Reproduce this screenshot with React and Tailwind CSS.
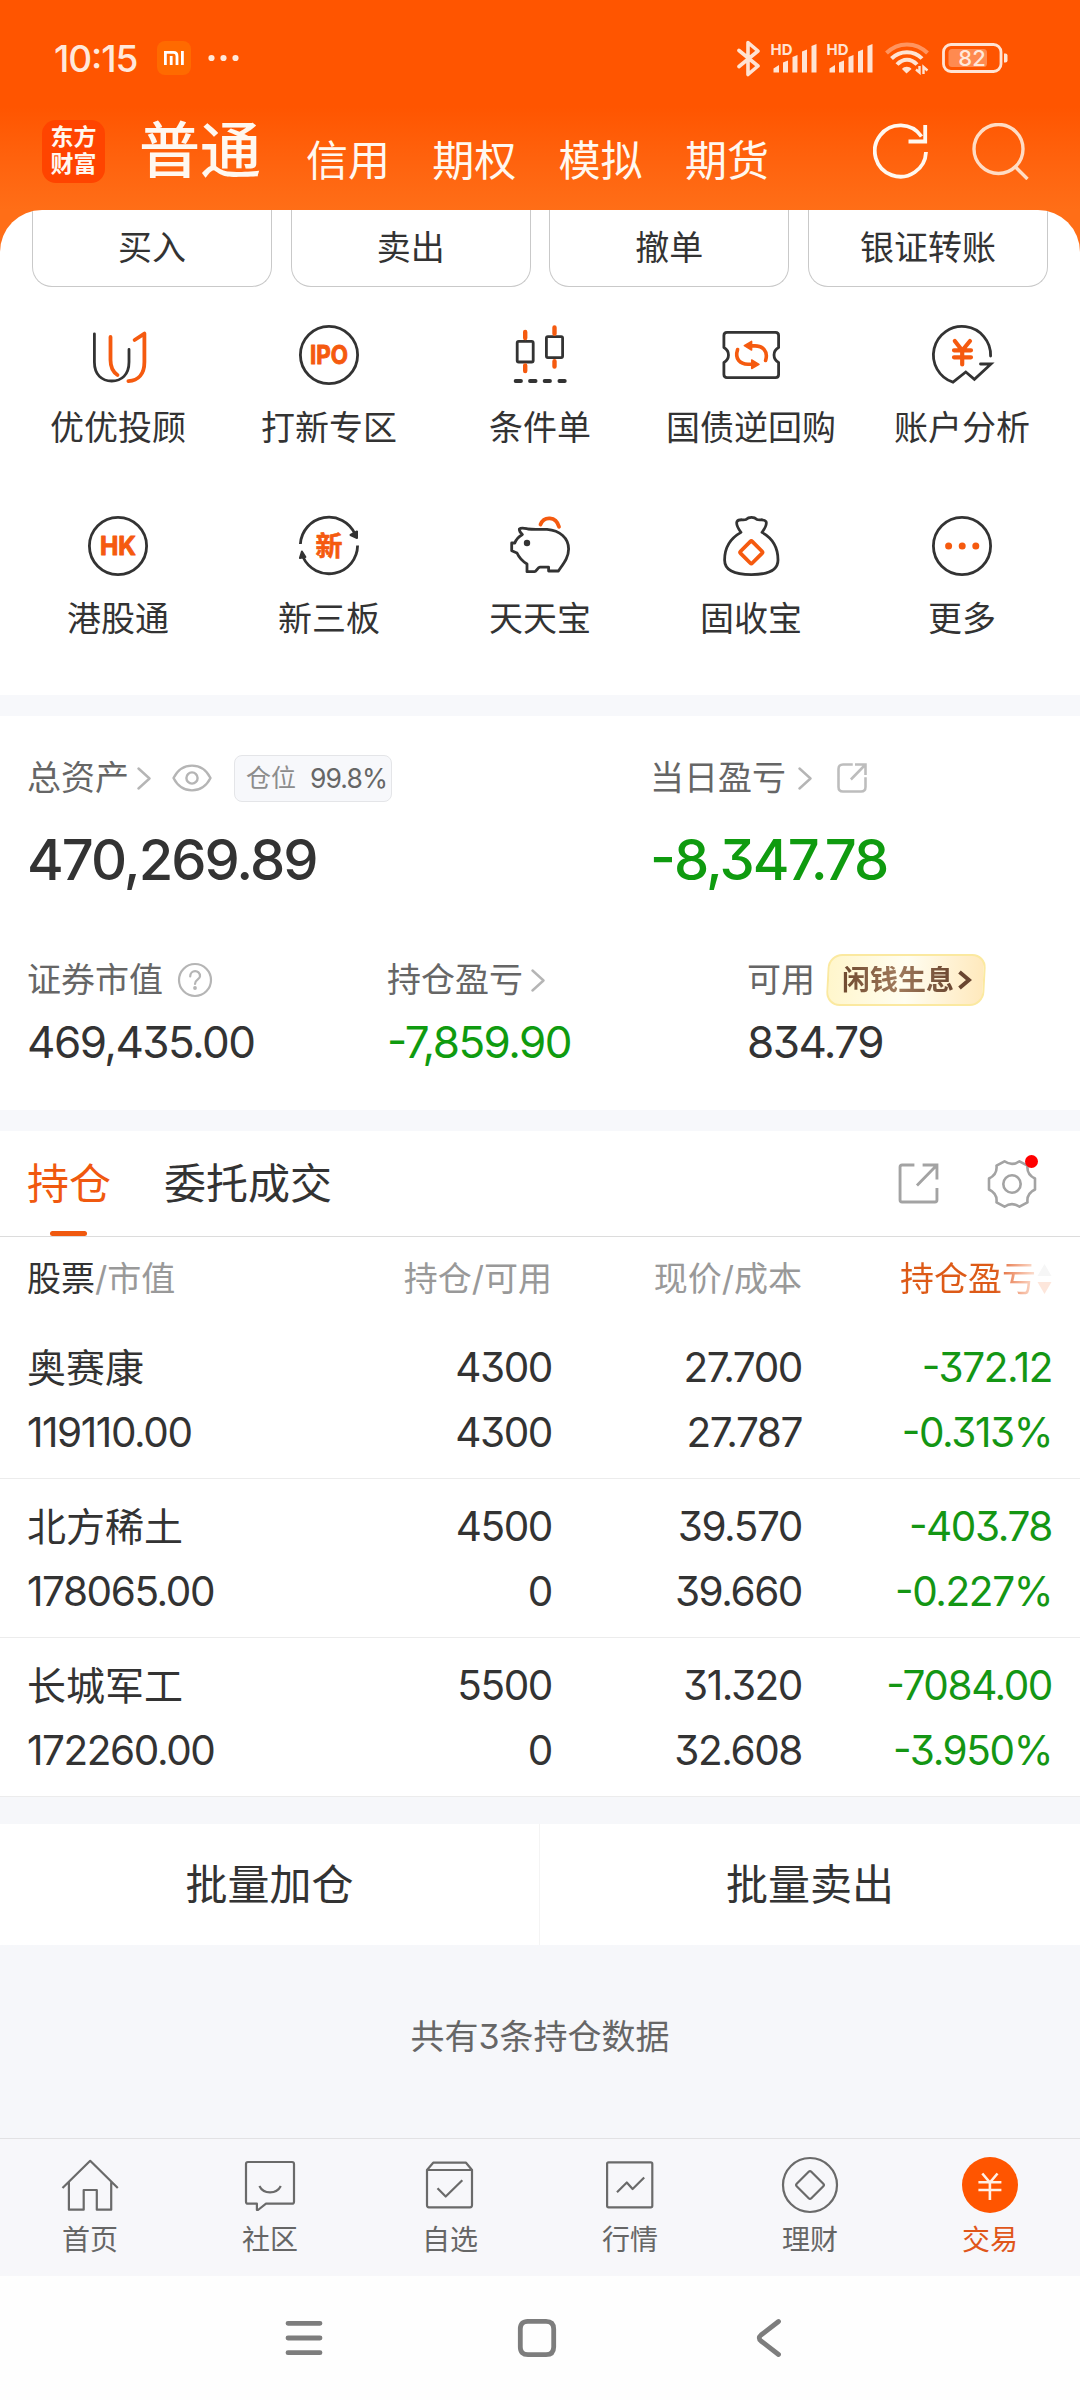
const INK = '#333333'
const ORANGE = '#f55a0f'

const accountTabs = ['信用', '期权', '模拟', '期货']
const tradeButtons = ['买入', '卖出', '撤单', '银证转账']

const holdings = [
  { name: '奥赛康', value: '119110.00', qty: '4300', avail: '4300', price: '27.700', cost: '27.787', pnl: '-372.12', pct: '-0.313%' },
  { name: '北方稀土', value: '178065.00', qty: '4500', avail: '0', price: '39.570', cost: '39.660', pnl: '-403.78', pct: '-0.227%' },
  { name: '长城军工', value: '172260.00', qty: '5500', avail: '0', price: '31.320', cost: '32.608', pnl: '-7084.00', pct: '-3.950%' },
]

function MenuIcon({ children }) {
  return (
    <svg className="w-[60px] h-[60px] overflow-visible" viewBox="0 0 60 60" fill="none" stroke={INK} strokeWidth={2.8}
      strokeLinecap="round" strokeLinejoin="round">
      {children}
    </svg>
  )
}

function CircleText({ text, width }) {
  return (
    <MenuIcon>
      <circle cx="30" cy="30" r="28.6" />
      <text x="30" y="39.2" textAnchor="middle" textLength={width} lengthAdjust="spacingAndGlyphs" fill={ORANGE}
        stroke={ORANGE} strokeWidth={1} fontFamily="Inter, sans-serif" fontWeight="700" fontSize="25.5">{text}</text>
    </MenuIcon>
  )
}

const menu = [
  {
    label: '优优投顾',
    icon: (
      <MenuIcon>
        <path d="M6.4 8.8V37C6.4 50 14 56 23.7 56S41 50 41 37V24.5" />
        <g stroke={ORANGE} strokeWidth={3.8}>
          <path d="M22.5 12V35c0 8 2.5 12 7 15" />
          <path d="M46.6 15l9.8-6.4V37c0 12-6 18.6-16 19.2" />
        </g>
      </MenuIcon>
    ),
  },
  { label: '打新专区', icon: <CircleText text="IPO" width={38} /> },
  {
    label: '条件单',
    icon: (
      <MenuIcon>
        <rect x="7.2" y="16.4" width="16" height="20.6" rx="1.5" />
        <rect x="36.4" y="11.6" width="16.2" height="21" rx="1.5" />
        <g stroke={ORANGE} strokeWidth={4.4}>
          <path d="M15.2 7v6M15.2 40.5v5.5M44.5 2.4v6.4M44.5 36.3V41.500" />
        </g>
        <path d="M5.6 56h5.400M20 56h5.600M34.600 56h5.400M49.400 56h5.400" strokeWidth={3.8} />
      </MenuIcon>
    ),
  },
  {
    label: '国债逆回购',
    icon: (
      <MenuIcon>
        <path d="M6 7.400H54.500Q57.600 7.400 57.600 10.500V22.500C51.500 26 51.500 34 57.600 37.500V49.500Q57.600 52.600 54.500 52.600H6Q2.900 52.600 2.900 49.500V37.500C9 34 9 26 2.900 22.500V10.500Q2.900 7.400 6 7.400Z" />
        <g stroke={ORANGE} strokeWidth={3.6}>
          <path d="M44.600 35.500C47.500 26 41.500 20.900 34 20.900H30" />
          <path d="M16.600 24.500C13.500 34 19 39.200 27 39.200H31" />
        </g>
        <path d="M23.300 20.700l7.300-4.300v8.600zM38 39.300l-7.300-4.300v8.600z" fill={ORANGE} stroke={ORANGE} strokeWidth={1.5} />
      </MenuIcon>
    ),
  },
  {
    label: '账户分析',
    icon: (
      <MenuIcon>
        <path strokeLinejoin="miter" d="M58.600 31A28.600 28.600 0 1 0 21 57.200L33.800 47l8.600 7.300L59 39H48.500" />
        <path d="M22.800 16l7.400 9.500L38 16M30.200 25.500v14M22 25.300h17M22 32.300h17" stroke={ORANGE} strokeWidth={4.2} />
      </MenuIcon>
    ),
  },
  { label: '港股通', icon: <CircleText text="HK" width={36} /> },
  {
    label: '新三板',
    icon: (
      <MenuIcon>
        <path strokeLinecap="butt" d="M1.400 28A28.600 28.600 0 0 1 56 18M58.600 29.500A28.600 28.600 0 0 1 4 41" />
        <path d="M51.500 19l6.500-3.500v6.500zM2.900 35.500l3.500 5.500-5.500 1z" fill={INK} strokeWidth={2} />
        <text x="30" y="39.600" textAnchor="middle" fill={ORANGE} fontFamily="'Noto Sans CJK SC', sans-serif" stroke={ORANGE}
          strokeWidth={0.6} fontWeight="700" fontSize="27">新</text>
      </MenuIcon>
    ),
  },
  {
    label: '天天宝',
    icon: (
      <MenuIcon>
        <path d="M30.500 8.500C34 0 46 0 49 10.800" stroke={ORANGE} strokeWidth={3.800} />
        <path d="M9.300 13C11.500 11 15 12.300 18 13 25 14 31 13 37 13.400 50 14.500 58.600 22 58.600 33c0 9-5.600 15-10.200 22H38.600V51.200H30C27.500 51.500 26.500 55.700 24.500 55.700H17V48C13 45.500 9 41.500 7 37L1.700 34.700V27H4.800C6 23.500 9 20.500 12.400 18.500 10.500 17 9.300 15 9.300 13z" />
        <circle cx="17" cy="27" r="3.200" fill={INK} stroke="none" />
      </MenuIcon>
    ),
  },
  {
    label: '固收宝',
    icon: (
      <MenuIcon>
        <path d="M20 16.400C17.500 13 14.500 9 16 5.500 18 2.500 22 4.500 25 3.500 28 .700 33 .700 36 3.500 39 4.500 43 2.500 45 5.500 46.500 9 43.500 13 41 16.400 52 22.500 57 31 57 44 57 54 48 58.600 30.400 58.600S3.600 54 3.600 44C3.600 31 9 22.500 20 16.400z" />
        <rect x="22" y="28" width="16.600" height="16.600" rx="1.500" transform="rotate(45 30.300 36.300)" stroke={ORANGE} strokeWidth={3.800} />
      </MenuIcon>
    ),
  },
  {
    label: '更多',
    icon: (
      <MenuIcon>
        <circle cx="30" cy="30" r="28.600" />
        <g fill={ORANGE} stroke="none">
          <circle cx="16.600" cy="30" r="3.500" />
          <circle cx="30.200" cy="30" r="3.500" />
          <circle cx="43.800" cy="30" r="3.500" />
        </g>
      </MenuIcon>
    ),
  },
]

const bottomNav = [
  {
    label: '首页',
    d: 'M2.500 33L30.200 5.800 57.800 33M8.900 27.300V54.700H23.700V35H36.800V54.700H51.200V27.300',
  },
  {
    label: '社区',
    d: 'M8 7H52Q54 7 54 9V46.700Q54 48.700 52 48.700H26L18 55H16.900V48.700H8Q6 48.700 6 46.700V9Q6 7 8 7zM19.400 31C23.500 39.500 36.500 39.500 40.800 31',
  },
  {
    label: '自选',
    d: 'M7 15L13.200 7.700H46L52 15V50.300Q52 52.300 50 52.300H9Q7 52.300 7 50.300zH52M17.500 33.300l8.200 8.200L42.300 25.300',
  },
  {
    label: '行情',
    d: 'M8.600 7.300H50.800Q52.300 7.300 52.300 8.800V50.800Q52.300 52.300 50.800 52.300H8.600Q7.100 52.300 7.100 50.800V8.800Q7.100 7.300 8.600 7.300zM17 37.200l9.800-9.700 5.800 6.500L44.200 22.500',
  },
  {
    label: '理财',
    d: 'M30 3A27 27 0 1 0 30 57 27 27 0 1 0 30 3zM28.700 16.700Q30 15.400 31.300 16.700L43.300 28.700Q44.600 30 43.300 31.300L31.300 43.300Q30 44.600 28.700 43.300L16.700 31.300Q15.400 30 16.700 28.700z',
  },
]

function Chevron({ className }) {
  return (
    <svg className={className} width="14" height="23" viewBox="0 0 14 23" fill="none" stroke="#b5b5b5" strokeWidth={2.4}
      strokeLinecap="round" strokeLinejoin="round">
      <path d="M1.500 1.500L12.500 11.500 1.500 21.500" />
    </svg>
  )
}

function Signal() {
  return (
    <svg width="46" height="30" viewBox="0 0 46 30" fill="#ffe3d3">
      <text x="-0.500" y="12" fontFamily="Inter, sans-serif" fontWeight="700" fontSize="15" textLength="22" lengthAdjust="spacingAndGlyphs">HD</text>
      <path d="M2.500 29.500V25.500L8 22V29.500z" />
      <path d="M12 29.500V19.500L17 17.500V29.500z" />
      <path d="M21.500 29.500V14L26.500 12V29.500z" />
      <path d="M31 29.500V8.500L36 6.500V29.500z" />
      <path d="M40.500 29.500V3L45.500 1V29.500z" />
    </svg>
  )
}

function StatusBar() {
  return (
    <div className="flex items-center h-[116px] pl-[54px] pr-[72px] text-[#ffe8da]">
      <span className="w-[103px] text-[37px] font-medium leading-none tracking-[-0.03em]">10:15</span>
      <span className="flex items-center justify-center w-[34px] h-[34px] rounded-[8px] bg-[#ff6a00]">
        <svg width="20" height="14" viewBox="0 0 20 14" fill="none" stroke="#fff" strokeWidth={2.800}>
          <path d="M1.400 14V1.400H9.500Q13 1.400 13 5V14M7.200 14V5M18.400 14V0" />
        </svg>
      </span>
      <svg className="ml-[17px]" width="31" height="8" viewBox="0 0 31 8" fill="#ffe8da">
        <circle cx="3.500" cy="4" r="3.100" />
        <circle cx="15.500" cy="4" r="3.100" />
        <circle cx="27.500" cy="4" r="3.100" />
      </svg>
      <div className="flex items-center ml-auto">
        <svg width="24" height="37" viewBox="0 0 24 37" fill="none" stroke="#ffe3d3" strokeWidth={3.600} strokeLinejoin="round" strokeLinecap="round">
          <path d="M2 10.500L21 26 11 34.500V2.500L21 11 2 26.500" />
        </svg>
        <div className="flex gap-[10px] ml-[10px]">
          <Signal />
          <Signal />
        </div>
        <svg className="ml-3" width="44" height="34" viewBox="0 0 44 34" fill="none" stroke="#ffe3d3" strokeWidth={4}>
          <path d="M1.500 12C13 .500 31 .500 42.500 12" opacity="0.450" />
          <path d="M6.500 17.500C15 9 29 9 37 17.500" />
          <path d="M12 23.500C18 17 26 17 32 23.500" />
          <path d="M21.500 32.500L17 28C19 25 24.500 25 26.500 28z" fill="#ffe3d3" stroke="none" />
          <path d="M34.500 25V31.500L31 28.500M38.500 33V26L42.500 29.500" strokeWidth={2.400} />
        </svg>
        <svg className="ml-[13px]" width="66" height="30" viewBox="0 0 66 30">
          <rect x="1.500" y="1.500" width="57.500" height="27" rx="7.500" fill="none" stroke="#ffe3d3" strokeWidth={2.800} />
          <rect x="6.500" y="6" width="38.500" height="18" rx="3.500" fill="#ff8a50" />
          <path d="M62 10.500h1.500q2 0 2 2v5q0 2-2 2H62z" fill="#ffe3d3" />
          <text x="30" y="22.800" textAnchor="middle" fill="#ffe8da" fontFamily="Inter, sans-serif" fontWeight="500" fontSize="22">82</text>
        </svg>
      </div>
    </div>
  )
}

function Header() {
  return (
    <div className="flex items-center h-[70px] mb-6 pl-[42px] pr-[51px] text-[#fff8f0]">
      <div className="flex flex-col items-center justify-center w-[63px] h-[63px] rounded-[14px] bg-[#ff4400] text-[23px] leading-[27px] font-bold">
        <span>东方</span>
        <span>财富</span>
      </div>
      <h1 className="ml-[34px] w-[131px] text-[61px] leading-none font-medium">普通</h1>
      <nav className="flex gap-[42px] ml-[36px] pt-[19px] text-[42px] leading-[50px]">
        {accountTabs.map(t => <span key={t} className="w-[84.300px] whitespace-nowrap">{t}</span>)}
      </nav>
      <svg className="ml-auto" width="56" height="56" viewBox="0 0 56 56" fill="none" stroke="#fff8f0" strokeWidth={3.800}>
        <path d="M53 29A25.600 25.600 0 1 1 48.500 13.500" />
        <path d="M52.200 2V18.500H35.500" />
      </svg>
      <svg className="ml-[43px]" width="57" height="57" viewBox="0 0 57 57" fill="none" stroke="#ffdcc4" strokeWidth={3.400}>
        <circle cx="26.500" cy="26" r="24.500" />
        <path d="M43 43.500L55.500 56" />
      </svg>
    </div>
  )
}

function ShareIcon({ size, color, rx }) {
  return (
    <svg width={size} height={size} viewBox="0 0 40 40" fill="none" stroke={color} strokeWidth={size > 30 ? 2.800 : 3.400}>
      <path d={rx > 3
        ? 'M21 2H8Q2 2 2 8V32Q2 38 8 38H32Q38 38 38 32V19'
        : 'M16 2H4Q2 2 2 4V36Q2 38 4 38H36Q38 38 38 36V24.500'} />
      <path d="M24 2H38V16M38 2L18.500 22" />
    </svg>
  )
}

function Assets() {
  return (
    <section className="h-[394px] pl-[27px] pt-[38px] bg-white text-[34px] text-[#666666]">
      <div className="flex">
        <div className="w-[623px]">
          <div className="flex items-center h-12 leading-none">
            <span>总资产</span>
            <Chevron className="ml-2" />
            <svg className="ml-[21px]" width="40" height="28" viewBox="0 0 40 28" fill="none" stroke="#b5b5b5" strokeWidth={2.400}>
              <path d="M1.500 14C10-2.500 30-2.500 38.500 14 30 30.500 10 30.500 1.500 14z" strokeLinejoin="round" />
              <circle cx="20" cy="14" r="5.600" />
            </svg>
            <span className="flex items-center gap-[14px] ml-[22px] w-[158px] h-[47px] pl-[11px] rounded-[8px] border border-[#e4e5e8] bg-[#f7f8fb]">
              <span className="text-[25px] text-[#8c8c8c]">仓位</span>
              <span className="num text-[26.500px] tracking-[-0.035em]">99.8%</span>
            </span>
          </div>
          <div className="mt-7 text-[56px] leading-[60px] font-medium tracking-[-0.035em] text-[#333333]">470,269.89</div>
        </div>
        <div>
          <div className="flex items-center h-12 leading-none">
            <span>当日盈亏</span>
            <Chevron className="ml-3 mr-[25px]" />
            <ShareIcon size={30} color="#bdbdbd" rx={6} />
          </div>
          <div className="mt-7 text-[56px] leading-[60px] font-medium tracking-[-0.035em] text-[#0f9b0f]">-8,347.78</div>
        </div>
      </div>

      <div className="grid grid-cols-3 w-[1080px] mt-16">
        <div>
          <div className="flex items-center h-[52px] leading-none">
            <span>证券市值</span>
            <svg className="ml-[14px]" width="36" height="36" viewBox="0 0 36 36" fill="none" stroke="#b5b5b5" strokeWidth={2.200}>
              <circle cx="18" cy="18" r="16" />
              <path d="M13.200 14.500C13.200 7.500 23 7.500 23 14.200 23 17.500 18 17.500 18 22" strokeLinecap="round" />
              <circle cx="18" cy="26" r="1.900" fill="#b5b5b5" stroke="none" />
            </svg>
          </div>
          <div className="mt-[11px] text-[44px] leading-[51px] tracking-[-0.035em] text-[#333333]">469,435.00</div>
        </div>
        <div>
          <div className="flex items-center h-[52px] leading-none">
            <span>持仓盈亏</span>
            <Chevron className="ml-2" />
          </div>
          <div className="mt-[11px] text-[44px] leading-[51px] tracking-[-0.035em] text-[#0f9b0f]">-7,859.90</div>
        </div>
        <div>
          <div className="flex items-center h-[52px] leading-none">
            <span>可用</span>
            <span className="relative flex items-center w-[158px] h-[52px] ml-3 pl-[15px]">
              <span className="absolute inset-0 -skew-x-3 rounded-[14px] border-2 border-[#fbe9a0] bg-linear-to-r from-[#fff6cc] via-[#fffdf0] to-[#ffe9bd]" />
              <span className="relative text-[28px] font-bold bg-linear-to-r from-[#6f4a30] via-[#a07a5c] to-[#6a4630] bg-clip-text text-transparent">闲钱生息</span>
              <svg className="relative ml-1" width="14" height="20" viewBox="0 0 14 20" fill="none" stroke="#6a4630" strokeWidth={4}>
                <path d="M1.500 2L11 10 1.500 18" />
              </svg>
            </span>
          </div>
          <div className="mt-[11px] text-[44px] leading-[51px] tracking-[-0.035em] text-[#333333]">834.79</div>
        </div>
      </div>
    </section>
  )
}

function HoldingTabs() {
  return (
    <div className="flex items-center h-[106px] pl-[27px] pr-[43px] border-b border-[#dcdcdc] bg-white text-[42px] leading-none text-[#333333]">
      <div className="relative flex items-center h-full text-[#f0590f]">
        持仓
        <span className="absolute left-[23px] bottom-0 w-[37px] h-[5px] rounded-full bg-[#f0590f]" />
      </div>
      <span className="ml-[53px]">委托成交</span>
      <div className="flex items-center ml-auto">
        <ShareIcon size={41} color="#a3a3a3" rx={2} />
        <span className="relative ml-[48px]">
          <svg width="50" height="50" viewBox="0 0 50 50" fill="none" stroke="#a3a3a3" strokeWidth={2.600} strokeLinejoin="round">
            <path d="M17.500 2.300Q25 7.500 32.500 2.300L40.500 6.700Q39.500 15.500 48 19.500V30.500Q39.500 34.500 40.500 43.300L32.500 47.700Q25 42.500 17.500 47.700L9.500 43.300Q10.500 34.500 2 30.500V19.500Q10.500 15.500 9.500 6.700z" />
            <circle cx="25" cy="25" r="8.700" />
          </svg>
          <span className="absolute -top-1 -right-[1px] w-[13px] h-[13px] rounded-full bg-[#ff0000]" />
        </span>
      </div>
    </div>
  )
}

function HoldingTable() {
  return (
    <div className="bg-white">
      <div className="flex items-center h-[83px] pl-[27px] pr-7 text-[34px] leading-none text-[#999999] text-right">
        <div className="w-[300px] text-left"><span className="text-[#333333]">股票</span>/市值</div>
        <div className="w-[225px]">持仓/可用</div>
        <div className="w-[250px]">现价/成本</div>
        <div className="flex items-center justify-end w-[250px]">
          <span className="bg-linear-to-r from-[#dd5a17] from-70% to-[#fbe3d6] bg-clip-text text-transparent leading-[44px]">持仓盈亏</span>
          <svg className="ml-[1px]" width="15" height="30" viewBox="0 0 15 30">
            <path d="M7.500 0L14.500 12H.500z" fill="#f6f6f6" />
            <path d="M7.500 30L14.500 18H.500z" fill="#fde6db" />
          </svg>
        </div>
      </div>
      {holdings.map(h => (
        <div key={h.name} className="flex h-[159px] pl-[27px] pr-7 pt-[15px] border-b border-[#ececec] text-[40.500px] leading-[65px] tracking-[-0.035em] text-right text-[#333333]">
          <div className="w-[300px] text-left">
            <div className="text-[39px] tracking-normal">{h.name}</div>
            <div>{h.value}</div>
          </div>
          <div className="w-[225px]">
            <div>{h.qty}</div>
            <div>{h.avail}</div>
          </div>
          <div className="w-[250px]">
            <div>{h.price}</div>
            <div>{h.cost}</div>
          </div>
          <div className="w-[250px] text-[#149614]">
            <div>{h.pnl}</div>
            <div>{h.pct}</div>
          </div>
        </div>
      ))}
    </div>
  )
}

function BottomNav() {
  return (
    <nav className="grid grid-cols-6 h-[138px] pt-[16px] border-t border-[#e2e2e4] bg-[#f7f7fa] text-[28px] leading-[34px] text-[#666666]">
      {bottomNav.map(item => (
        <div key={item.label} className="flex flex-col items-center gap-2">
          <svg width="60" height="60" viewBox="0 0 60 60" fill="none" stroke="#6a6a6a" strokeWidth={2.200} strokeLinejoin="round">
            <path d={item.d} />
          </svg>
          <span>{item.label}</span>
        </div>
      ))}
      <div className="flex flex-col items-center gap-2 text-[#e0561a]">
        <svg width="60" height="60" viewBox="0 0 60 60" fill="none" stroke="#fff0e6" strokeWidth={2.600}>
          <circle cx="30" cy="30" r="28" fill="#ff5500" stroke="none" />
          <path d="M22.300 18.500L29.900 27.500 37.500 18.500M29.900 27V45M18.400 27.200H41.400M18.400 35H41.400" />
        </svg>
        <span>交易</span>
      </div>
    </nav>
  )
}

function SystemNav() {
  return (
    <div className="flex items-center h-[124px] pl-[189px] bg-[#fefefe]">
      {[
        'M3 5.300H35M3 20H35M3 34.700H35',
        'M10 3.300H29Q36.700 3.300 36.700 11V29Q36.700 36.700 29 36.700H11Q3.300 36.700 3.300 29V11Q3.300 3.300 11 3.300',
        'M29.500 3.500L12 17Q8.500 20 12 23L29.500 36.500',
      ].map(d => (
        <div key={d} className="flex justify-center w-[232px]">
          <svg width="40" height="40" viewBox="0 0 40 40" fill="none" stroke="#7d7d7d" strokeWidth={4.800} strokeLinecap="round" strokeLinejoin="round">
            <path d={d} />
          </svg>
        </div>
      ))}
    </div>
  )
}

export default function App() {
  return (
    <div className="w-[1080px] h-[2400px] overflow-hidden bg-[#f6f7fa] [font-family:Inter,'Noto_Sans_CJK_SC',sans-serif] [font-feature-settings:'cv09','case']">
      <div className="bg-linear-to-b from-[#ff5500] from-[107px] to-[#ff6e17] to-[210px]">
        <StatusBar />
        <Header />
        <main className="rounded-t-[42px] bg-white text-[34px] text-[#333333] overflow-hidden">
          <div className="grid grid-cols-4 gap-[18.600px] px-8 h-[77px]">
            {tradeButtons.map(b => (
              <button key={b} className="rounded-b-[20px] border border-t-0 border-[#c9c9c9] leading-[76px]">{b}</button>
            ))}
          </div>
          <div className="grid grid-cols-5 gap-y-[68px] h-[408px] px-[12.500px] pt-[38px] content-start">
            {menu.map(m => (
              <div key={m.label} className="flex flex-col items-center gap-[23px]">
                {m.icon}
                <span className="leading-[40px] whitespace-nowrap">{m.label}</span>
              </div>
            ))}
          </div>
        </main>
      </div>
      <div className="h-[21px] bg-[#f7f8fb]" />
      <Assets />
      <div className="h-[21px] bg-[#f7f8fb]" />
      <HoldingTabs />
      <HoldingTable />
      <div className="grid grid-cols-2 h-[121px] mt-[27px] bg-white text-[42px] leading-[119px] text-[#333333] text-center">
        <button className="border-r border-[#f4f4f4]">批量加仓</button>
        <button>批量卖出</button>
      </div>
      <p className="h-[193px] text-center text-[34px] leading-[184px] text-[#666666]">共有3条持仓数据</p>
      <BottomNav />
      <SystemNav />
    </div>
  )
}
